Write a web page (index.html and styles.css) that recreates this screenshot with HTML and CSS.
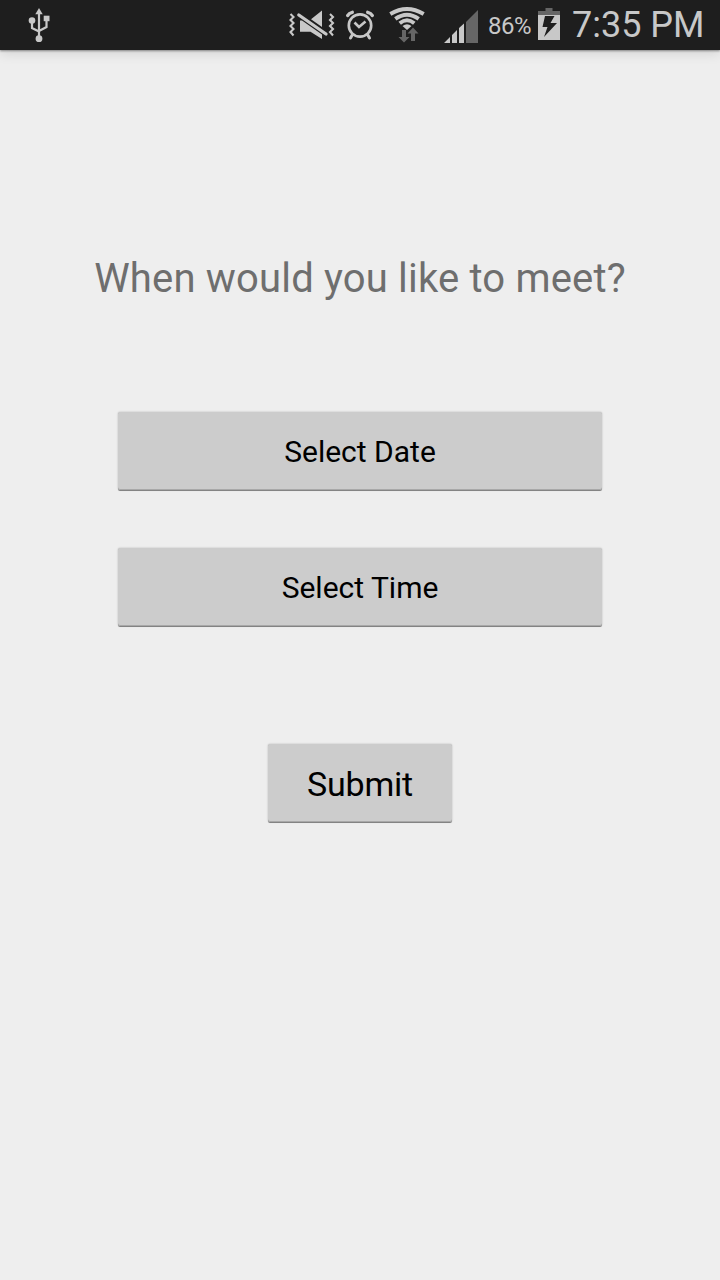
FILE: index.html
```html
<!DOCTYPE html>
<html lang="en">
<head>
<meta charset="utf-8">
<title>Schedule a meeting</title>
<link rel="stylesheet" href="styles.css">
</head>
<body>
<header class="status-bar">
  <svg class="icon-usb" width="24" height="50" viewBox="0 0 24 50" fill="none" stroke="#c8c8c8" stroke-width="2.200">
    <path d="M12 12V37M5 21V28L12 31.500M19.500 18V27L12 31"/>
    <path d="M12 8L15.700 14.200H8.300Z" fill="#c8c8c8" stroke="none"/>
    <circle cx="12" cy="38.700" r="3.400" fill="#c8c8c8" stroke="none"/>
    <circle cx="5" cy="20.500" r="3.300" fill="#c8c8c8" stroke="none"/>
    <path d="M16.700 15.700h5.800v5.500h-5.800z" fill="#c8c8c8" stroke="none"/>
  </svg>
  <div class="tray">
    <svg class="icon-mute" width="48" height="50" viewBox="0 0 48 50">
      <path d="M2.500 14L5.500 17L2.500 20L5.500 23L2.500 26L5.500 29L2.500 32L5.500 35.500M42 14L45 17L42 20L45 23L42 26L45 29L42 32L45 35.500" fill="none" stroke="#c8c8c8" stroke-width="2.100"/>
      <path d="M12 20.500H14L34 34.600V39L22.500 31.700H12ZM23 19.300L34 10.500V27Z" fill="#c8c8c8"/>
      <path d="M10.800 15L38 34" stroke="#c8c8c8" stroke-width="3.300" stroke-linecap="round"/>
    </svg>
    <svg class="icon-alarm" width="30" height="50" viewBox="0 0 30 50" fill="none" stroke="#c8c8c8">
      <circle cx="15" cy="25.500" r="11.200" stroke-width="2.700"/>
      <path d="M9.500 22.500L14 27L20.500 21.500" stroke-width="2.600"/>
      <path d="M2.700 15.500Q4 13 7.300 12.300M27.300 15.500Q26 13 22.700 12.300" stroke-width="3.400" stroke-linecap="round"/>
      <path d="M7.500 34.500L5.500 38M22.500 34.500L24.500 38" stroke-width="3" stroke-linecap="round"/>
    </svg>
    <svg class="icon-wifi" width="38" height="50" viewBox="0 0 38 50">
      <g fill="none" stroke="#c8c8c8" stroke-width="3.900">
        <path d="M2.300 14Q19 4 35.700 14"/>
        <path d="M7.300 18.900Q19 10.500 30.700 18.900"/>
        <path d="M11.700 23.300Q19 17.300 26.300 23.300"/>
      </g>
      <path d="M14.500 26Q19 22.300 23.500 26L19 30Z" fill="#c8c8c8"/>
      <path d="M14 30h4v7h3.500L16 42.500L10.500 37H14Z" fill="#666"/>
      <path d="M25 27.500L30.500 33.500H27V41H23V33.500H19.500Z" fill="#666"/>
    </svg>
    <svg class="icon-signal" width="34" height="50" viewBox="0 0 34 50">
      <path d="M22 22L34 10V43H22Z" fill="#666"/>
      <path d="M0 43L6 37V43ZM8 35L13 30V43H8ZM15 28L20 23.500V43H15Z" fill="#c8c8c8"/>
    </svg>
    <span class="percent">86%</span>
    <svg class="icon-battery" width="22" height="50" viewBox="0 0 22 50">
      <path d="M0 11H7.500V8H14.500V11H22V15H0Z" fill="#666"/>
      <path d="M0 15H22V40H0Z" fill="#c8c8c8"/>
      <path d="M7 16H16.500L12.500 23H19L6 37L9.500 27H4.500Z" fill="#1e1e1e"/>
    </svg>
    <time class="clock">7:35 PM</time>
  </div>
</header>
<main class="form">
  <h1 class="question">When would you like to meet?</h1>
  <button class="btn btn-date">Select Date</button>
  <button class="btn btn-time">Select Time</button>
  <button class="btn btn-submit">Submit</button>
</main>
</body>
</html>
```
FILE: styles.css
```css
* {
  box-sizing: border-box;
}

body {
  margin: 0;
  height: 1280px;
  background: #eee;
  font-family: Roboto, "Liberation Sans", sans-serif;
  overflow: hidden;
}

svg {
  display: block;
  flex: none;
}

.status-bar {
  display: flex;
  justify-content: space-between;
  height: 50px;
  padding: 0 16px 0 27px;
  background: #1e1e1e;
  color: #c8c8c8;
  box-shadow: 0 1px 2px rgba(0, 0, 0, 0.4), 0 3px 12px rgba(0, 0, 0, 0.12);
}

.tray {
  display: flex;
}

.icon-mute {
  margin-right: 9px;
}

.icon-alarm {
  margin-right: 13px;
}

.icon-wifi {
  margin-right: 18px;
}

.icon-signal {
  margin-right: 10px;
}

.percent {
  width: 50px;
  font-size: 24px;
  letter-spacing: -0.5px;
  line-height: 52px;
  white-space: nowrap;
}

.clock {
  width: 132px;
  margin-left: 12px;
  font-size: 36px;
  line-height: 51px;
  white-space: nowrap;
}

.form {
  display: flex;
  flex-direction: column;
  align-items: center;
  padding-top: 204px;
}

.question {
  margin: 0;
  font-size: 40px;
  font-weight: 400;
  letter-spacing: 0.18px;
  line-height: 50px;
  color: #6e6e6e;
  white-space: nowrap;
}

.btn {
  height: 78px;
  padding: 2px 0 0;
  border: 0;
  border-radius: 2px;
  background: #ccc;
  color: #000;
  font-family: inherit;
  font-size: 30px;
  line-height: 76px;
  box-shadow: inset 0 -1px 0 #a8a8a8, 0 1px 0 #838383, 0 0 2px rgba(0, 0, 0, 0.25);
}

.btn-date {
  width: 484px;
  margin-top: 108px;
}

.btn-time {
  width: 484px;
  margin-top: 58px;
}

.btn-submit {
  width: 184px;
  margin-top: 118px;
  font-size: 34px;
  letter-spacing: -0.2px;
}
```
